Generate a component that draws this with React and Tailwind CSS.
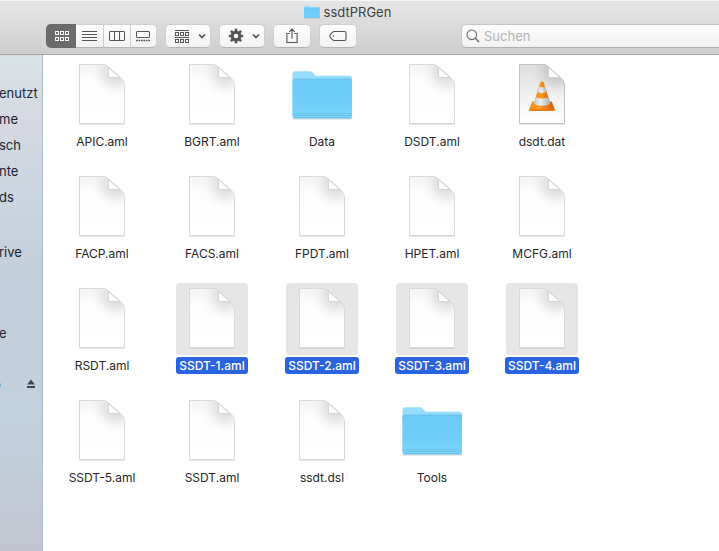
import React from "react";

const sidebarGroups = [
  { labels: ["enutzt", "me", "sch", "nte", "ds"], space: "mt-[25px]" },
  { labels: ["rive"], space: "mt-[29px]" },
  { labels: ["e"], space: "mt-[55px]" },
  { labels: ["o"], space: "mt-[25px]", eject: true },
];

const files = [
  { name: "APIC.aml" },
  { name: "BGRT.aml" },
  { name: "Data", kind: "folder" },
  { name: "DSDT.aml" },
  { name: "dsdt.dat", kind: "vlc" },
  { name: "FACP.aml" },
  { name: "FACS.aml" },
  { name: "FPDT.aml" },
  { name: "HPET.aml" },
  { name: "MCFG.aml" },
  { name: "RSDT.aml" },
  { name: "SSDT-1.aml", selected: true },
  { name: "SSDT-2.aml", selected: true },
  { name: "SSDT-3.aml", selected: true },
  { name: "SSDT-4.aml", selected: true },
  { name: "SSDT-5.aml" },
  { name: "SSDT.aml" },
  { name: "ssdt.dsl" },
  { name: "Tools", kind: "folder" },
];

function Gradients() {
  return (
    <svg width="0" height="0" className="absolute" aria-hidden="true">
      <defs>
        <linearGradient id="paper" x1="0" y1="0" x2="0" y2="1">
          <stop offset="0" stopColor="#f5f5f5" />
          <stop offset="0.3" stopColor="#fdfdfd" />
          <stop offset="1" stopColor="#ffffff" />
        </linearGradient>
        <linearGradient id="vlcPaper" x1="0" y1="0" x2="0" y2="1">
          <stop offset="0" stopColor="#dedede" />
          <stop offset="0.5" stopColor="#f0f0f0" />
          <stop offset="1" stopColor="#ffffff" />
        </linearGradient>
        <radialGradient id="foldShade" cx="50" cy="14" r="24" gradientUnits="userSpaceOnUse">
          <stop offset="0" stopColor="#000" stopOpacity="0.17" />
          <stop offset="0.4" stopColor="#000" stopOpacity="0.09" />
          <stop offset="0.7" stopColor="#000" stopOpacity="0.03" />
          <stop offset="1" stopColor="#000" stopOpacity="0" />
        </radialGradient>
        <linearGradient id="folderFront" x1="0" y1="0" x2="0" y2="1">
          <stop offset="0" stopColor="#6bcaf6" />
          <stop offset="0.55" stopColor="#70cefa" />
          <stop offset="1" stopColor="#7cd5fd" />
        </linearGradient>
        <linearGradient id="orange" x1="0" y1="0" x2="1" y2="0">
          <stop offset="0" stopColor="#f08a12" />
          <stop offset="0.4" stopColor="#fb9a1e" />
          <stop offset="1" stopColor="#d95d05" />
        </linearGradient>
        <linearGradient id="stripe" x1="0" y1="0" x2="1" y2="0">
          <stop offset="0" stopColor="#c3c8cc" />
          <stop offset="0.4" stopColor="#eceff1" />
          <stop offset="1" stopColor="#a9afb4" />
        </linearGradient>
      </defs>
    </svg>
  );
}

function PageIcon({ vlc }) {
  const outline = "M13.5 5.5H37C40 5.5 41.5 7 43.5 8.8L53.5 17.5C57 20.5 58.5 23 58.5 27V64.5H13.5Z";
  return (
    <svg width="72" height="72" viewBox="0 0 72 72" aria-hidden="true">
      <path d="M13 65H59" stroke="#000" strokeOpacity="0.12" strokeWidth="1.6" />
      <path d={outline} fill={vlc ? "url(#vlcPaper)" : "url(#paper)"} />
      <path d={outline} fill="url(#foldShade)" />
      <path d={outline} fill="none" stroke={vlc ? "#c2c2c2" : "#dadada"} />
      <path d="M42.5 8.5V18.5H54Z" fill="#fdfdfd" stroke="#cfcfcf" strokeWidth="0.8" />
      {vlc && (
        <g>
          <path d="M26.2 42.5H45.8L48.8 50.6Q49 52 47.8 52H24.2Q23 52 23.2 50.6Z" fill="url(#orange)" />
          <path d="M23.2 50.4H48.8Q49 52 47.8 52H24.2Q23 52 23.2 50.4Z" fill="#e07a10" />
          <path d="M34.2 23.5Q36 21.3 37.8 23.5L44.1 44Q44 46.9 36 46.9Q28 46.9 27.9 44Z" fill="url(#orange)" />
          <path d="M32.8 27.8Q36 29.3 39.2 27.8L40.8 33Q36 35.3 31.2 33Z" fill="url(#stripe)" />
          <path d="M29.7 38Q36 41.2 42.3 38L44.1 43.8Q43.6 46.8 36 46.8Q28.4 46.8 27.9 43.8Z" fill="url(#stripe)" />
        </g>
      )}
    </svg>
  );
}

function FolderIcon({ size, viewBox }) {
  return (
    <svg width={size} height={size} viewBox={viewBox} aria-hidden="true">
      <path d="M7 59.6H66" stroke="#000" strokeOpacity="0.16" strokeWidth="1.6" />
      <path
        d="M6.5 14.8Q6.5 12.3 9 12.3H24Q26 12.3 27.2 13.9L28 15.1Q29.2 16.7 31 16.7H63.5Q66 16.7 66 19.2V57Q66 59.3 63.5 59.3H9Q6.5 59.3 6.5 57Z"
        fill="#98dcfb"
      />
      <path d="M6.5 22.5Q6.5 20 9 20H63.5Q66 20 66 22.5V57Q66 59.3 63.5 59.3H9Q6.5 59.3 6.5 57Z" fill="url(#folderFront)" />
      <path d="M6.5 22.5Q6.5 20 9 20H63.5Q66 20 66 22.5" fill="none" stroke="#60bce9" strokeWidth="0.7" />
      <path d="M6.5 54.5H66M6.5 56.5H66" stroke="#5cbdec" strokeWidth="0.8" strokeOpacity="0.7" />
      <path d="M7.5 58.8H65" stroke="#5ab6e3" strokeWidth="0.7" />
    </svg>
  );
}

function Squares({ x, y, pitch }) {
  return [0, 1].map((row) =>
    [0, 1, 2].map((col) => (
      <rect key={`${row}-${col}`} x={x + col * 5 + 0.5} y={y + row * pitch + 0.5} width="3" height="3" strokeWidth="1" />
    ))
  );
}

function ToolIcon({ width, children }) {
  return (
    <svg width={width} height="16" viewBox={`0 0 ${width} 16`} fill="none" stroke="currentColor" className="shrink-0" aria-hidden="true">
      {children}
    </svg>
  );
}

function Chevron() {
  return (
    <ToolIcon width={8}>
      <path d="M1 6.5L4 9.5L7 6.5" strokeWidth="1.7" />
    </ToolIcon>
  );
}

function Gear() {
  return (
    <ToolIcon width={16}>
      <g transform="translate(8 8)">
        {[0, 45, 90, 135].map((angle) => (
          <path key={angle} d="M0 -7.2V-4M0 4V7.2" strokeWidth="2.7" transform={`rotate(${angle})`} />
        ))}
        <circle r="3.8" strokeWidth="3" />
      </g>
    </ToolIcon>
  );
}

const surface = "flex h-6 items-center border-[#cfcfcf] border-b-[#b4b4b4] bg-linear-to-b from-[#fdfdfd] to-[#f2f2f2] text-[#555]";
const buttonLook = `${surface} shrink-0 rounded-[5px] border`;
const segmentLook = `${surface} w-[27px] justify-center border-y`;

function Toolbar() {
  return (
    <header className="flex flex-col border-b border-[#a5a5a5] bg-linear-to-b from-[#e6e6e6] to-[#cecece] shadow-[inset_0_1px_0_#f5f5f5]">
      <h1 className="flex h-6 items-center justify-center gap-1 pr-6 text-[13px] leading-4 text-[#404040]">
        <FolderIcon size={16} viewBox="6 6 61 60" />
        ssdtPRGen
      </h1>
      <div className="flex gap-2 overflow-hidden pb-[6px] pl-[46px]">
        <div className="flex shrink-0">
          <button
            aria-label="Symbole"
            aria-pressed="true"
            className="flex h-6 w-[30px] items-center justify-center rounded-l-[5px] bg-[#6b6b6b] pl-0.5 text-white"
          >
            <ToolIcon width={14}>
              <Squares x={0} y={3} pitch={6} />
            </ToolIcon>
          </button>
          <button aria-label="Liste" className={segmentLook}>
            <ToolIcon width={15}>
              <path d="M0 3.5H15M0 6.5H15M0 9.5H15M0 12.5H15" strokeWidth="1" />
            </ToolIcon>
          </button>
          <button aria-label="Spalten" className={`${segmentLook} border-l`}>
            <ToolIcon width={16}>
              <rect x="0.5" y="3.5" width="15" height="9" rx="0.5" strokeWidth="1" />
              <path d="M5.5 3.5V12.5M10.5 3.5V12.5" strokeWidth="1" />
            </ToolIcon>
          </button>
          <button aria-label="Galerie" className={`${segmentLook} rounded-r-[5px] border-x`}>
            <ToolIcon width={15}>
              <rect x="0.5" y="3.5" width="13" height="6" rx="0.5" strokeWidth="1" />
              <path d="M0 12.5H14" strokeWidth="1.5" strokeDasharray="1.7 0.76" />
            </ToolIcon>
          </button>
        </div>
        <button aria-label="Gruppieren" className={`${buttonLook} w-[46px] gap-[9px] pl-[9px]`}>
          <ToolIcon width={14}>
            <path d="M0 2.5H14" strokeWidth="1" />
            <Squares x={0} y={4} pitch={7} />
            <path d="M0 9.5H14" strokeWidth="1" />
          </ToolIcon>
          <Chevron />
        </button>
        <button aria-label="Aktionen" className={`${buttonLook} w-[46px] gap-2 pl-2`}>
          <Gear />
          <Chevron />
        </button>
        <button aria-label="Teilen" className={`${buttonLook} w-[38px] justify-center`}>
          <ToolIcon width={12}>
            <path d="M3.7 5.5H0.9V14.5H11.1V5.5H8.3M6 10.5V1.2M3.2 3.8L6 1L8.8 3.8" strokeWidth="1.1" />
          </ToolIcon>
        </button>
        <button aria-label="Tags" className={`${buttonLook} w-[38px] justify-center`}>
          <ToolIcon width={18}>
            <path d="M5.2 3.5H15.5Q17 3.5 17 5V11Q17 12.5 15.5 12.5H5.2Q4.2 12.5 3.4 11.7L1.3 9.3Q0.3 8 1.3 6.7L3.4 4.3Q4.2 3.5 5.2 3.5Z" strokeWidth="1.1" />
            <circle cx="4.4" cy="8" r="0.8" fill="currentColor" stroke="none" />
          </ToolIcon>
        </button>
        <label className="ml-24 flex h-6 min-w-0 grow items-center gap-1 rounded-l-[5px] border border-r-0 border-[#c6c6c6] border-b-[#b0b0b0] bg-linear-to-b from-[#fdfdfd] to-[#f1f1f1] pl-1 text-[#666]">
          <ToolIcon width={14}>
            <circle cx="5.8" cy="6.8" r="4.8" strokeWidth="1.1" />
            <path d="M9.3 10.3L13 14" strokeWidth="1.4" />
          </ToolIcon>
          <input
            type="search"
            aria-label="Suchen"
            placeholder="Suchen"
            className="min-w-0 grow bg-transparent text-[13px] leading-4 outline-none placeholder:text-[#b4b4b4]"
          />
        </label>
      </div>
    </header>
  );
}

function Sidebar() {
  return (
    <nav className="w-[43px] shrink-0 overflow-hidden border-r border-[#abb9c9] bg-[linear-gradient(180deg,#d8e2e5_0%,#d5d8e1_14%,#cad6e0_28%,#c3cedc_45%,#c3cedc_60%,#c2d2df_72%,#c1ccd9_84%,#c3c6d1_100%)] text-[13px] leading-[26px] text-[#1b2530]">
      {sidebarGroups.map((group) => (
        <ul key={group.labels[0]} className={group.space}>
          {group.labels.map((label) => (
            <li key={label} className="flex items-center justify-between pr-[6px]">
              <a href="#" className={group.eject ? "-ml-[7px]" : "-ml-px"}>
                {label}
              </a>
              {group.eject && (
                <button aria-label="Auswerfen" className="text-[#3f4a58]">
                  <svg width="10" height="10" viewBox="0 0 10 10" fill="currentColor" aria-hidden="true">
                    <path d="M5 0.5L9 5.5H1ZM1 7H9V9H1Z" />
                  </svg>
                </button>
              )}
            </li>
          ))}
        </ul>
      ))}
    </nav>
  );
}

function FileItem({ name, kind, selected }) {
  return (
    <li className="flex flex-col items-center gap-[2px]">
      <div className={selected ? "size-[72px] rounded bg-[#e6e6e6]" : "size-[72px]"}>
        {kind === "folder" ? <FolderIcon size={72} viewBox="0 0 72 72" /> : <PageIcon vlc={kind === "vlc"} />}
      </div>
      <span
        className={
          selected
            ? "rounded-[3px] bg-[#2a63de] px-[3px] text-[12px] leading-[17px] font-medium text-white"
            : "px-[3px] text-[12px] leading-[17px] text-[#262626]"
        }
      >
        {name}
      </span>
    </li>
  );
}

export default function App() {
  return (
    <div className="flex min-h-screen flex-col overflow-hidden bg-white font-['Inter',sans-serif]">
      <Gradients />
      <Toolbar />
      <div className="flex grow">
        <Sidebar />
        <main className="grow pt-1 pl-1">
          <ul className="grid grid-cols-[repeat(5,110px)] gap-y-[21px]">
            {files.map((file) => (
              <FileItem key={file.name} {...file} />
            ))}
          </ul>
        </main>
      </div>
    </div>
  );
}
